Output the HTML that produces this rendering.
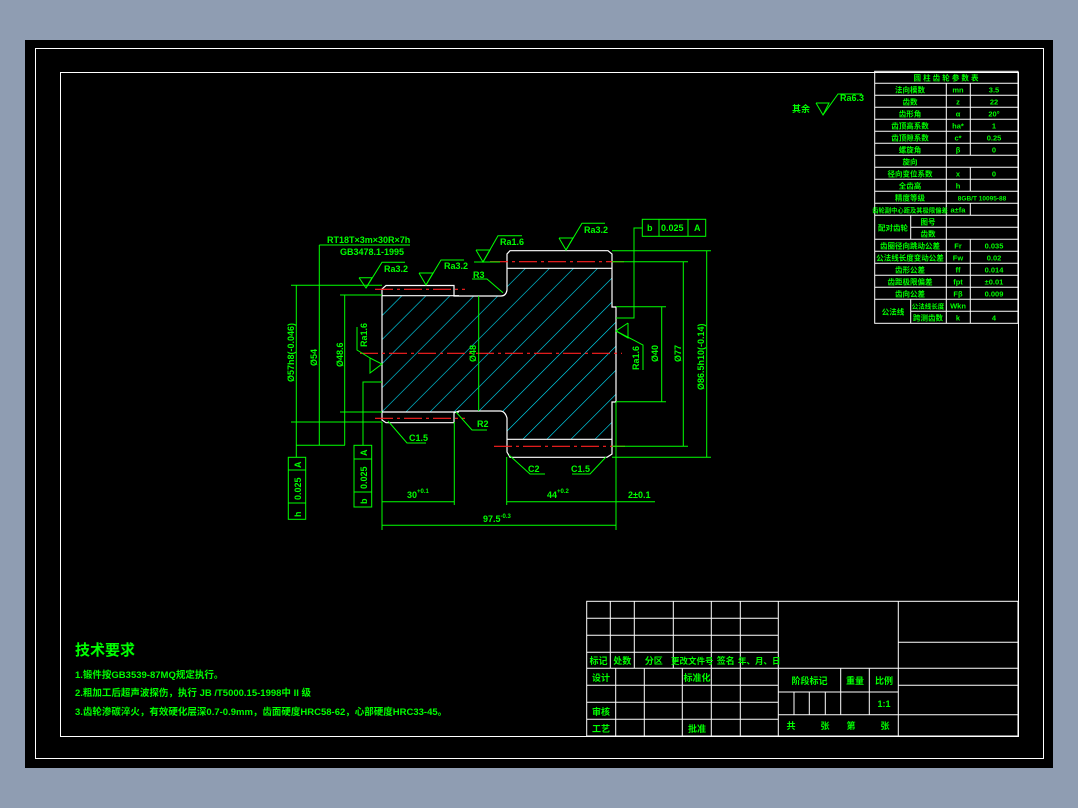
<!DOCTYPE html>
<html><head><meta charset="utf-8"><style>
html,body{margin:0;padding:0;background:#8f9db2;}
svg{display:block}
text{font-family:"Liberation Sans","Noto Sans CJK SC",sans-serif;fill:#00ff00;font-weight:bold;}
</style></head><body>
<svg width="1078" height="808" viewBox="0 0 1078 808" xmlns="http://www.w3.org/2000/svg">
<defs>
<pattern id="h" patternUnits="userSpaceOnUse" width="17" height="17" patternTransform="rotate(45)">
<line x1="0" y1="0" x2="0" y2="17" stroke="#00e5ff" stroke-width="1.2"/>
</pattern>
<clipPath id="c"><path d="M382,296 L458,296 L501,296 Q506,296 507,290 L507,268 L612,268 L612,307 L616,307 L616,402 L612,402 L612,439 L507,439 L507,418 Q505,411 500,411 L382,412 Z"/></clipPath>
</defs>
<rect x="0" y="0" width="1078" height="808" fill="#8f9db2"/>
<rect x="25" y="40" width="1028" height="728" fill="#000"/>
<rect x="35.5" y="48.5" width="1008" height="710" fill="none" stroke="#fff" stroke-width="1"/>
<rect x="60.5" y="72.5" width="958" height="664" fill="none" stroke="#fff" stroke-width="1"/>

<rect x="380" y="265" width="240" height="180" fill="url(#h)" clip-path="url(#c)"/>

<g stroke="#fff" stroke-width="1.2" fill="none">
<path d="M382,420 L382,289 L386,285.5 L454,285.5 L454,296 L459,296 L501,296 Q506,296 507,290 L507,254 L510,250.7 L608,250.7 L612,254 L612,307 L616,307 L616,402 L612,402 L612,454 L607,457.3 L510,457.3 L507,452 L507,418 Q505,411 500,411 L459,411 L454,413 L454,422.7 L386,422.7 Z"/>
<line x1="382" y1="295.7" x2="459" y2="295.7"/>
<line x1="382" y1="412" x2="459" y2="412"/>
<line x1="507" y1="268.3" x2="612" y2="268.3"/>
<line x1="507" y1="439.3" x2="612" y2="439.3"/>
</g>

<g stroke="#ff2020" stroke-width="1.2" stroke-dasharray="18,4,3,4">
<line x1="360" y1="353.3" x2="622" y2="353.3"/>
<line x1="375" y1="289.3" x2="465" y2="289.3"/>
<line x1="375" y1="418.3" x2="465" y2="418.3"/>
<line x1="490" y1="261.7" x2="625" y2="261.7"/>
<line x1="494" y1="446.3" x2="625" y2="446.3"/>
</g>

<g stroke="#00ff00" stroke-width="1" fill="none">
<line x1="478.7" y1="296" x2="478.7" y2="411"/>
<line x1="291" y1="285.3" x2="382" y2="285.3"/>
<line x1="291" y1="422" x2="382" y2="422"/>
<line x1="296.3" y1="285.3" x2="296.3" y2="457"/>
<line x1="319.3" y1="245" x2="319.3" y2="445.3"/>
<line x1="296" y1="445.3" x2="345" y2="445.3"/>
<line x1="340" y1="295" x2="382" y2="295"/>
<line x1="340" y1="412" x2="382" y2="412"/>
<line x1="344.7" y1="295" x2="344.7" y2="445.3"/>
<polyline points="363,445.3 363,382 382,382"/>
<rect x="288.3" y="457.3" width="17.4" height="62"/>
<line x1="288.3" y1="470" x2="305.7" y2="470"/><line x1="288.3" y1="503" x2="305.7" y2="503"/>
<rect x="354" y="445.3" width="17.7" height="61.7"/>
<line x1="354" y1="459" x2="371.7" y2="459"/><line x1="354" y1="492" x2="371.7" y2="492"/>
<line x1="382" y1="422" x2="382" y2="530"/>
<line x1="454.3" y1="422" x2="454.3" y2="505"/>
<line x1="506.7" y1="457" x2="506.7" y2="505"/>
<line x1="616" y1="402" x2="616" y2="530"/>
<line x1="382" y1="501.7" x2="454" y2="501.7"/>
<line x1="506.7" y1="501.7" x2="655" y2="501.7"/>
<line x1="382" y1="525.3" x2="616" y2="525.3"/>
<line x1="616" y1="306.7" x2="666" y2="306.7"/>
<line x1="616" y1="401.7" x2="666" y2="401.7"/>
<line x1="661.7" y1="306.7" x2="661.7" y2="401.7"/>
<line x1="612" y1="261.7" x2="688" y2="261.7"/>
<line x1="612" y1="446.3" x2="688" y2="446.3"/>
<line x1="683.3" y1="261.7" x2="683.3" y2="446.3"/>
<line x1="612" y1="250.7" x2="711" y2="250.7"/>
<line x1="612" y1="457.3" x2="711" y2="457.3"/>
<line x1="706.7" y1="250.7" x2="706.7" y2="457.3"/>
<rect x="642.3" y="219.3" width="63.4" height="17"/>
<line x1="659" y1="219.3" x2="659" y2="236.3"/><line x1="688" y1="219.3" x2="688" y2="236.3"/>
<polyline points="642.3,228 634,228 634,318 616,318"/>
<polyline points="359,277.7 372,277.7 366,288 359,277.7"/><polyline points="366,288 382,262.3 405,262.3"/>
<polyline points="419,273 433,273 426,285 419,273"/><polyline points="426,285 441,260 464,260"/>
<polyline points="476,250 490,250 483,262 476,250"/><polyline points="483,262 498,235.7 522,235.7"/>
<line x1="474" y1="262" x2="500" y2="262"/>
<polyline points="559,238 573,238 566,250 559,238"/><polyline points="566,250 582,223.3 605,223.3"/>
<polyline points="816,103 829,103 823,115 816,103"/><polyline points="823,115 838,94 862,94"/>
<polyline points="370,358 370,373 382,364 370,358"/><polyline points="357,339 357,327 357,350 370,358"/>
<polyline points="628,323 628,338 616,331 628,323"/><polyline points="616,331 643,345 643,370"/>
<polyline points="327,245 410,245"/><line x1="319.3" y1="245" x2="327" y2="245"/>
<polyline points="388,421 407,443 426,443"/>
<polyline points="456,412 472,430 487,430"/>
<polyline points="509,455 530,474 545,474"/>
<polyline points="606,457 590,474 572,474"/>
<polyline points="472,279 487,279 503,292.7"/>
</g>

<g font-size="9">
<text x="327" y="243">RT18T×3m×30R×7h</text>
<text x="340" y="255">GB3478.1-1995</text>
<text x="384" y="272">Ra3.2</text>
<text x="444" y="269">Ra3.2</text>
<text x="500" y="245">Ra1.6</text>
<text x="584" y="233">Ra3.2</text>
<text x="473" y="278">R3</text>
<text x="409" y="441">C1.5</text>
<text x="477" y="427">R2</text>
<text x="528" y="472">C2</text>
<text x="571" y="472">C1.5</text>
<text x="407" y="498">30<tspan font-size="6" dy="-5">+0.1</tspan></text>
<text x="547" y="498">44<tspan font-size="6" dy="-5">+0.2</tspan></text>
<text x="628" y="498">2±0.1</text>
<text x="483" y="522">97.5<tspan font-size="6" dy="-4">-0.3</tspan></text>
<text x="661" y="231">0.025</text><text x="647" y="231">b</text><text x="694" y="231">A</text>
<text x="792" y="112">其余</text>
<text x="840" y="101">Ra6.3</text>
<text transform="translate(294,382) rotate(-90)">Ø57h8(-0.046)</text>
<text transform="translate(317,366) rotate(-90)">Ø54</text>
<text transform="translate(343,367) rotate(-90)">Ø48.6</text>
<text transform="translate(476,362) rotate(-90)">Ø48</text>
<text transform="translate(658,362) rotate(-90)">Ø40</text>
<text transform="translate(681,362) rotate(-90)">Ø77</text>
<text transform="translate(704,390) rotate(-90)">Ø86.5h10(-0.14)</text>
<text transform="translate(367,347) rotate(-90)">Ra1.6</text>
<text transform="translate(639,370) rotate(-90)">Ra1.6</text>
<text transform="translate(301,500) rotate(-90)">0.025</text>
<text transform="translate(301,468) rotate(-90)">A</text>
<text transform="translate(301,517) rotate(-90)">h</text>
<text transform="translate(367,489) rotate(-90)">0.025</text>
<text transform="translate(367,456) rotate(-90)">A</text>
<text transform="translate(367,504) rotate(-90)">b</text>
</g>

<g stroke="#fff" stroke-width="1" fill="none">
<rect x="874.7" y="71.3" width="143.3" height="252"/>
<line x1="874.7" y1="83.3" x2="1018" y2="83.3"/><line x1="874.7" y1="95.3" x2="1018" y2="95.3"/>
<line x1="874.7" y1="107.3" x2="1018" y2="107.3"/><line x1="874.7" y1="119.3" x2="1018" y2="119.3"/>
<line x1="874.7" y1="131.3" x2="1018" y2="131.3"/><line x1="874.7" y1="143.3" x2="1018" y2="143.3"/>
<line x1="874.7" y1="155.3" x2="1018" y2="155.3"/><line x1="874.7" y1="167.3" x2="1018" y2="167.3"/>
<line x1="874.7" y1="179.3" x2="1018" y2="179.3"/><line x1="874.7" y1="191.3" x2="1018" y2="191.3"/>
<line x1="874.7" y1="203.3" x2="1018" y2="203.3"/><line x1="874.7" y1="215.3" x2="1018" y2="215.3"/>
<line x1="910.7" y1="227.3" x2="1018" y2="227.3"/><line x1="874.7" y1="239.3" x2="1018" y2="239.3"/>
<line x1="874.7" y1="251.3" x2="1018" y2="251.3"/><line x1="874.7" y1="263.3" x2="1018" y2="263.3"/>
<line x1="874.7" y1="275.3" x2="1018" y2="275.3"/><line x1="874.7" y1="287.3" x2="1018" y2="287.3"/>
<line x1="874.7" y1="299.3" x2="1018" y2="299.3"/><line x1="910.7" y1="311.3" x2="1018" y2="311.3"/>
<line x1="946.3" y1="83.3" x2="946.3" y2="323.3"/>
<line x1="970.3" y1="83.3" x2="970.3" y2="155.3"/><line x1="970.3" y1="167.3" x2="970.3" y2="191.3"/>
<line x1="970.3" y1="203.3" x2="970.3" y2="215.3"/><line x1="970.3" y1="239.3" x2="970.3" y2="323.3"/>
<line x1="910.7" y1="215.3" x2="910.7" y2="239.3"/><line x1="910.7" y1="299.3" x2="910.7" y2="323.3"/>
</g>
<g font-size="7.5" text-anchor="middle">
<text x="946" y="80.5">圆 柱 齿 轮 参 数 表</text>
<text x="910" y="92.5">法向模数</text><text x="958" y="92.5">mn</text><text x="994" y="92.5">3.5</text>
<text x="910" y="104.5">齿数</text><text x="958" y="104.5">z</text><text x="994" y="104.5">22</text>
<text x="910" y="116.5">齿形角</text><text x="958" y="116.5">α</text><text x="994" y="116.5">20°</text>
<text x="910" y="128.5">齿顶高系数</text><text x="958" y="128.5">ha*</text><text x="994" y="128.5">1</text>
<text x="910" y="140.5">齿顶隙系数</text><text x="958" y="140.5">c*</text><text x="994" y="140.5">0.25</text>
<text x="910" y="152.5">螺旋角</text><text x="958" y="152.5">β</text><text x="994" y="152.5">0</text>
<text x="910" y="164.5">旋向</text>
<text x="910" y="176.5">径向变位系数</text><text x="958" y="176.5">x</text><text x="994" y="176.5">0</text>
<text x="910" y="188.5">全齿高</text><text x="958" y="188.5">h</text>
<text x="910" y="200.5">精度等级</text><text x="982" y="200.5" font-size="6.5">8GB/T 10095-88</text>
<text x="910" y="212.5" font-size="6.3">齿轮副中心距及其极限偏差</text><text x="958" y="212.5">a±fa</text>
<text x="893" y="230.5">配对齿轮</text><text x="928" y="224.5">图号</text><text x="928" y="236.5">齿数</text>
<text x="910" y="248.5">齿圈径向跳动公差</text><text x="958" y="248.5">Fr</text><text x="994" y="248.5">0.035</text>
<text x="910" y="260.5">公法线长度变动公差</text><text x="958" y="260.5">Fw</text><text x="994" y="260.5">0.02</text>
<text x="910" y="272.5">齿形公差</text><text x="958" y="272.5">ff</text><text x="994" y="272.5">0.014</text>
<text x="910" y="284.5">齿距极限偏差</text><text x="958" y="284.5">fpt</text><text x="994" y="284.5">±0.01</text>
<text x="910" y="296.5">齿向公差</text><text x="958" y="296.5">Fβ</text><text x="994" y="296.5">0.009</text>
<text x="893" y="314.5">公法线</text><text x="928" y="308.5" font-size="6.5">公法线长度</text><text x="928" y="320.5">跨测齿数</text>
<text x="958" y="308.5">Wkn</text><text x="958" y="320.5">k</text><text x="994" y="320.5">4</text>
</g>

<g stroke="#fff" stroke-width="1" fill="none">
<rect x="586.7" y="601.3" width="431.3" height="134.7"/>
<line x1="586.7" y1="618.3" x2="778.3" y2="618.3"/><line x1="586.7" y1="635.3" x2="778.3" y2="635.3"/>
<line x1="586.7" y1="652.3" x2="778.3" y2="652.3"/><line x1="586.7" y1="668.3" x2="1018" y2="668.3"/>
<line x1="586.7" y1="685.3" x2="778.3" y2="685.3"/><line x1="586.7" y1="702.3" x2="778.3" y2="702.3"/>
<line x1="586.7" y1="719.3" x2="778.3" y2="719.3"/>
<line x1="610.3" y1="601.3" x2="610.3" y2="668.3"/><line x1="634.3" y1="601.3" x2="634.3" y2="668.3"/>
<line x1="673.3" y1="601.3" x2="673.3" y2="668.3"/><line x1="711.3" y1="601.3" x2="711.3" y2="736"/>
<line x1="740.3" y1="601.3" x2="740.3" y2="736"/><line x1="778.3" y1="601.3" x2="778.3" y2="736"/>
<line x1="898.3" y1="601.3" x2="898.3" y2="736"/>
<line x1="615.7" y1="668.3" x2="615.7" y2="736"/><line x1="644.3" y1="668.3" x2="644.3" y2="736"/>
<line x1="682.3" y1="668.3" x2="682.3" y2="736"/>
<line x1="778.3" y1="692" x2="898.3" y2="692"/><line x1="778.3" y1="714.7" x2="1018" y2="714.7"/>
<line x1="840.7" y1="668.3" x2="840.7" y2="714.7"/><line x1="869.3" y1="668.3" x2="869.3" y2="714.7"/>
<line x1="794" y1="692" x2="794" y2="714.7"/><line x1="809.3" y1="692" x2="809.3" y2="714.7"/>
<line x1="825.3" y1="692" x2="825.3" y2="714.7"/>
<line x1="898.3" y1="642.3" x2="1018" y2="642.3"/><line x1="898.3" y1="685.3" x2="1018" y2="685.3"/>
</g>
<g font-size="9" text-anchor="middle">
<text x="598.5" y="664">标记</text><text x="622.3" y="664">处数</text><text x="653.8" y="664">分区</text>
<text x="692.3" y="664" font-size="8.5">更改文件号</text><text x="725.8" y="664">签名</text><text x="759.3" y="664" font-size="8.5">年、月、日</text>
<text x="601" y="681">设计</text><text x="697" y="681">标准化</text>
<text x="601" y="715">审核</text><text x="601" y="732">工艺</text><text x="697" y="732">批准</text>
<text x="809.5" y="684">阶段标记</text><text x="855" y="684">重量</text><text x="884" y="684">比例</text>
<text x="884" y="707">1:1</text>
<text x="791" y="729">共</text><text x="825" y="729">张</text><text x="851" y="729">第</text><text x="885" y="729">张</text>
</g>

<text x="75" y="655" font-size="15">技术要求</text>
<g font-size="9.5">
<text x="75" y="678">1.锻件按GB3539-87MQ规定执行。</text>
<text x="75" y="696">2.粗加工后超声波探伤，执行 JB /T5000.15-1998中 II 级</text>
<text x="75" y="715">3.齿轮渗碳淬火，有效硬化层深0.7-0.9mm，齿面硬度HRC58-62，心部硬度HRC33-45。</text>
</g>
</svg>
</body></html>
